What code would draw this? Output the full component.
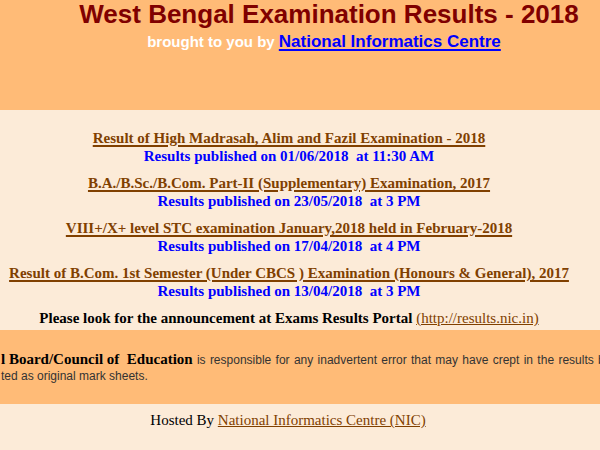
const results = [
  {
    title: "Result of High Madrasah, Alim and Fazil Examination - 2018",
    when: "Results published on 01/06/2018\u00a0 at 11:30 AM",
  },
  {
    title: "B.A./B.Sc./B.Com. Part-II (Supplementary) Examination, 2017",
    when: "Results published on 23/05/2018\u00a0 at 3 PM",
  },
  {
    title: "VIII+/X+ level STC examination January,2018 held in February-2018",
    when: "Results published on 17/04/2018\u00a0 at 4 PM",
  },
  {
    title: "Result of B.Com. 1st Semester (Under CBCS ) Examination (Honours & General), 2017",
    when: "Results published on 13/04/2018\u00a0 at 3 PM",
  },
];

const serif = "font-['Liberation_Serif','Times_New_Roman',serif]";
const sans = "font-['Liberation_Sans',Arial,sans-serif]";

export default function App() {
  return (
    <div className="w-[600px] h-[450px] overflow-hidden bg-[#fcebd8]">
      {/* header band */}
      <header className={`h-[110px] bg-[#ffbb77] pl-[58px] text-center ${sans}`}>
        <h1 className="text-[26px] leading-[28px] font-bold text-[#800000]">
          West Bengal Examination Results - 2018
        </h1>
        <p className="mt-[4px] mr-[10px] leading-[20px] font-bold">
          <span className="text-[15px] text-white">brought to you by </span>
          <a href="#" className="text-[17px] text-[#0000ff] underline decoration-2 underline-offset-[2px]">
            National Informatics Centre
          </a>
        </p>
      </header>

      <main className={`pt-[19px] pr-[22px] text-center font-bold text-[15px] ${serif}`}>
        {results.map((r) => (
          <div key={r.title} className="mb-[9px] leading-[18px] whitespace-nowrap">
            <a href="#" className="text-[#804000] underline decoration-[1.5px] underline-offset-[2px]">
              {r.title}
            </a>
            <div className="text-[#0000ff]">{r.when}</div>
          </div>
        ))}
        <p className="mt-[8px] leading-[18px] text-black">
          Please look for the announcement at Exams Results Portal{" "}
          <a href="#" className="font-normal text-[#804000] underline">
            (http://results.nic.in)
          </a>
        </p>
      </main>

      <section className="mt-[3px] h-[74px] bg-[#ffbb77] pt-[20px] pl-[1px] overflow-hidden whitespace-nowrap">
        <p className="leading-[16px]">
          <span className={`${serif} font-bold text-[15px] text-black`}>
            l Board/Council of&nbsp; Education
          </span>{" "}
          <span className={`${sans} text-[12px] text-[#333] [word-spacing:1px]`}>
            is responsible for any inadvertent error that may have crept in the results being published on NET.
          </span>
        </p>
        <p className={`${sans} text-[12px] leading-[16px] text-[#333]`}>ted as original mark sheets.</p>
      </section>

      <footer className={`pt-[6px] pr-[24px] text-center text-[15px] leading-[20px] ${serif} text-black`}>
        Hosted By{" "}
        <a href="#" className="text-[#804000] underline">
          National Informatics Centre (NIC)
        </a>
      </footer>
    </div>
  );
}
